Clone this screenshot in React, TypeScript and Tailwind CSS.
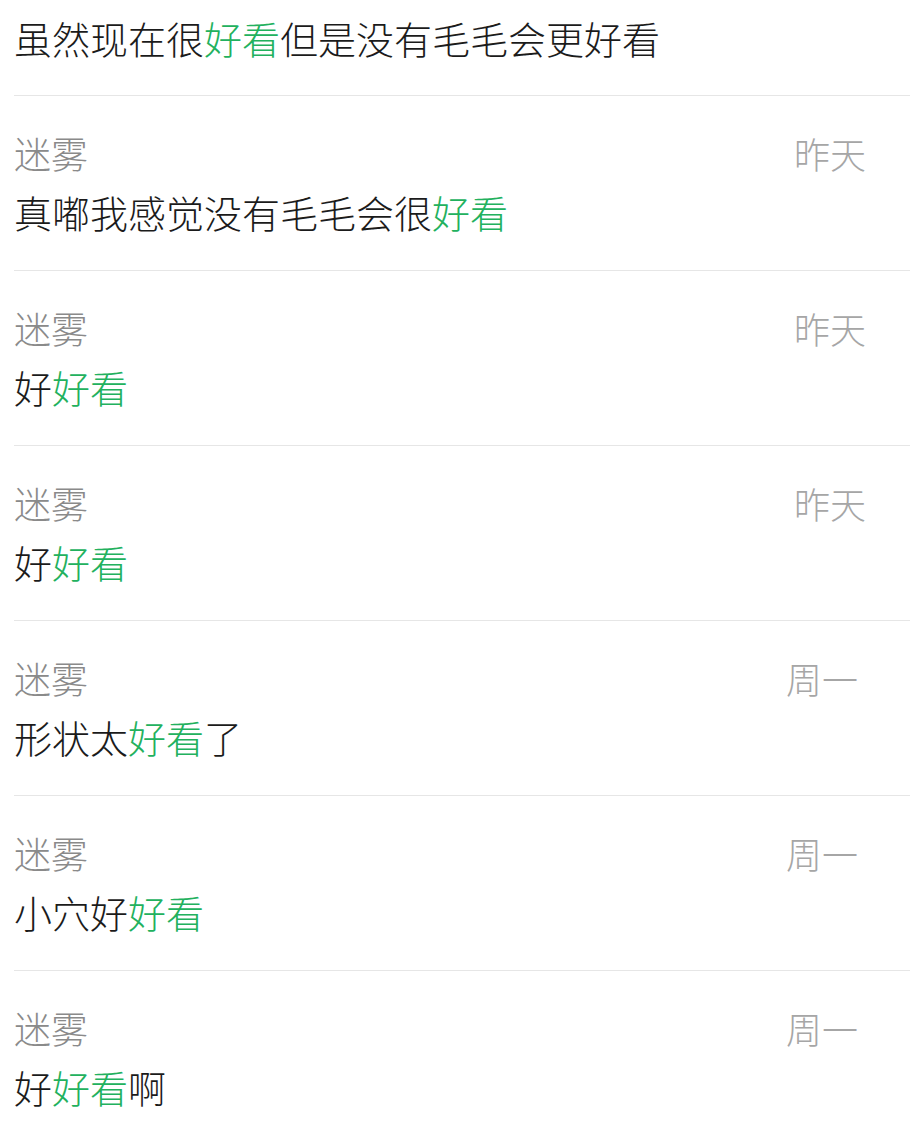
import React from 'react';

type Item = { name: string; time: string; parts: string[] };

// parts alternate: plain, highlighted, plain ...
const items: Item[] = [
  { name: '迷雾', time: '昨天', parts: ['真嘟我感觉没有毛毛会很', '好看'] },
  { name: '迷雾', time: '昨天', parts: ['好', '好看'] },
  { name: '迷雾', time: '昨天', parts: ['好', '好看'] },
  { name: '迷雾', time: '周一', parts: ['形状太', '好看', '了'] },
  { name: '迷雾', time: '周一', parts: ['小穴好', '好看'] },
  { name: '迷雾', time: '周一', parts: ['好', '好看', '啊'] },
];

const Message: React.FC<{ parts: string[] }> = ({ parts }) => (
  <p className="text-[38px] leading-[44px] font-light text-[#1b1b1b] whitespace-nowrap">
    {parts.map((p, i) =>
      i % 2 === 1 ? (
        <span key={i} className="text-[#22b15e]">{p}</span>
      ) : (
        <span key={i}>{p}</span>
      )
    )}
  </p>
);

const App: React.FC = () => {
  return (
    <div
      className="w-[910px] h-[1145px] overflow-hidden bg-white"
      style={{ fontFamily: '"Noto Sans CJK SC", "Noto Sans", sans-serif' }}
    >
      {/* first result, cut off at the top */}
      <div className="ml-[14px] pt-[16px] pb-[35px] border-b border-[#e6e6e6]">
        <Message parts={['虽然现在很', '好看', '但是没有毛毛会更好看']} />
      </div>

      {items.map((item, idx) => (
        <div key={idx} className="ml-[14px] pt-[35px] pb-[36px] border-b border-[#e6e6e6]">
          <div className="flex justify-between items-center">
            <span className="text-[37px] leading-[44px] font-light text-[#8a8a8a]">{item.name}</span>
            <span
              className={
                'text-[36px] leading-[44px] font-light text-[#a6a6a6] ' +
                (item.time === '昨天' ? 'pr-[44px]' : 'pr-[52px]')
              }
            >
              {item.time}
            </span>
          </div>
          <div className="mt-[15px]">
            <Message parts={item.parts} />
          </div>
        </div>
      ))}
    </div>
  );
};

export default App;
